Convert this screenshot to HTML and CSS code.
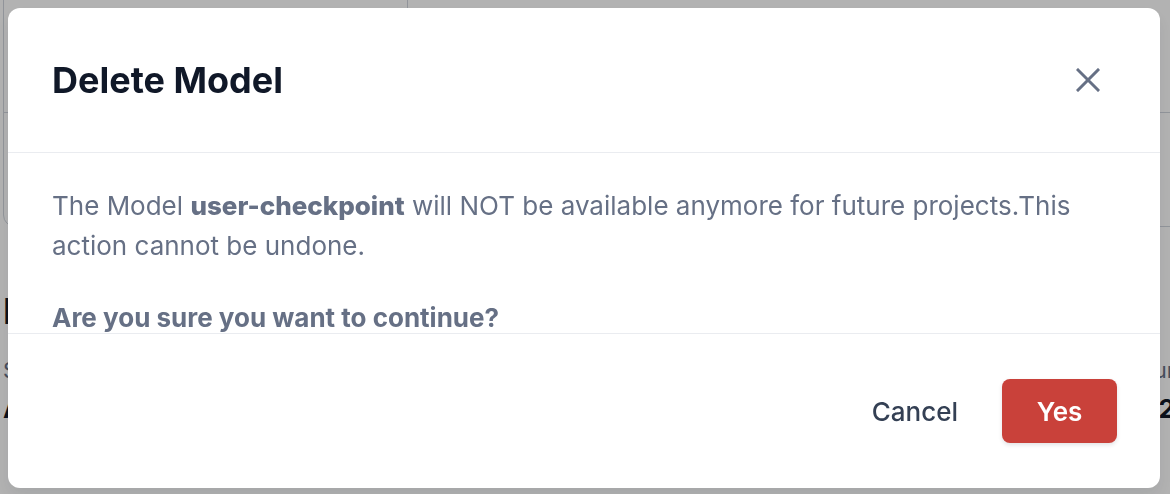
FILE: index.html
```html
<!DOCTYPE html>
<html lang="en">
<head>
  <meta charset="UTF-8">
  <title>Delete Model</title>
  <link rel="stylesheet" href="styles.css">
</head>
<body>
  <div class="page">
    <div class="card">
      <div class="card-row">
        <div class="cell"></div>
        <div class="cell"></div>
      </div>
      <div class="card-row">
        <div class="cell"></div>
        <div class="cell"></div>
      </div>
    </div>
    <h2 class="page-title">Information</h2>
    <div class="stats">
      <div class="stat">
        <span class="stat-label">Source</span>
        <span class="stat-value">Automatic</span>
      </div>
      <div class="stat stat-right">
        <span class="stat-label">Hour</span>
        <span class="stat-value">1,672</span>
      </div>
    </div>
  </div>

  <div class="overlay">
    <div class="modal">
      <div class="modal-header">
        <h1>Delete Model</h1>
        <button class="close-btn" aria-label="Close">
          <svg width="24" height="24" viewBox="0 0 24 24" fill="none" stroke="#667085" stroke-width="3" stroke-linecap="square">
            <path d="M2 2 L22 22 M22 2 L2 22"/>
          </svg>
        </button>
      </div>
      <div class="modal-body">
        <p>The Model <strong>user-checkpoint</strong> will NOT be available anymore for future projects.This action cannot be undone.</p>
        <p class="question">Are you sure you want to continue?</p>
      </div>
      <div class="modal-footer">
        <button class="btn-cancel">Cancel</button>
        <button class="btn-yes">Yes</button>
      </div>
    </div>
  </div>
</body>
</html>
```

FILE: styles.css
```css
body {
  margin: 0;
  font-family: Inter, "Noto Sans", sans-serif;
  background-color: #fff;
  overflow: hidden;
  height: 494px;
}

/* page under the dialog */
.page {
  padding: 0 0 0 3px;
}

.card {
  margin-top: -20px;
  width: 1190px;
  border: 1px solid #d0d5dd;
  border-radius: 12px;
}

.card-row {
  display: grid;
  grid-template-columns: 403px 1fr;
  height: 131px;
}

.card-row + .card-row {
  border-top: 1px solid #d0d5dd;
  height: 113px;
}

.cell + .cell {
  border-left: 1px solid #d0d5dd;
}

.page-title {
  margin: 62px 0 0;
  font-size: 36px;
  font-weight: 700;
  color: #101828;
}

.stats {
  display: flex;
  justify-content: space-between;
  width: 1172px;
  margin-top: 24px;
}

.stat {
  display: flex;
  flex-direction: column;
  gap: 10px;
}

.stat-right {
  align-items: flex-end;
}

.stat-label {
  font-size: 22px;
  color: #667085;
}

.stat-value {
  font-size: 26px;
  font-weight: 700;
  color: #101828;
}

/* dialog */
.overlay {
  position: fixed;
  inset: 0;
  background-color: rgba(0, 0, 0, 0.3);
  padding: 8px;
}

.modal {
  width: 1152px;
  height: 480px;
  background-color: #fff;
  border-radius: 12px;
  display: flex;
  flex-direction: column;
  box-shadow: 0 8px 16px rgba(16, 24, 40, 0.08);
  overflow: hidden;
}

.modal-header {
  height: 144px;
  flex-shrink: 0;
  padding: 0 44px;
  display: flex;
  align-items: center;
  justify-content: space-between;
  border-bottom: 1px solid #eaecf0;
}

.modal-header h1 {
  margin: 0;
  font-size: 36px;
  font-weight: 700;
  color: #101828;
}

.close-btn {
  border: none;
  background: none;
  padding: 16px;
  display: flex;
  cursor: pointer;
}

.modal-body {
  height: 180px;
  flex-shrink: 0;
  padding: 33px 44px 0;
  box-sizing: border-box;
  overflow: hidden;
  font-size: 26px;
  line-height: 40px;
  color: #667085;
}

.modal-body p {
  margin: 0 0 32px;
}

.modal-body strong {
  font-weight: 800;
}

.question {
  font-weight: 650;
}

.modal-footer {
  flex: 1;
  border-top: 1px solid #eaecf0;
  padding: 0 43px;
  display: flex;
  align-items: center;
  justify-content: flex-end;
  gap: 22px;
}

.btn-cancel {
  height: 64px;
  padding: 0 22px;
  border: none;
  background: none;
  font-family: inherit;
  font-size: 26px;
  font-weight: 500;
  color: #344054;
  cursor: pointer;
}

.btn-yes {
  width: 115px;
  height: 64px;
  border: none;
  border-radius: 8px;
  background-color: #c9413a;
  color: #fff;
  font-family: inherit;
  font-size: 26px;
  font-weight: 600;
  box-shadow: 0 2px 4px rgba(16, 24, 40, 0.12);
  cursor: pointer;
}
```
